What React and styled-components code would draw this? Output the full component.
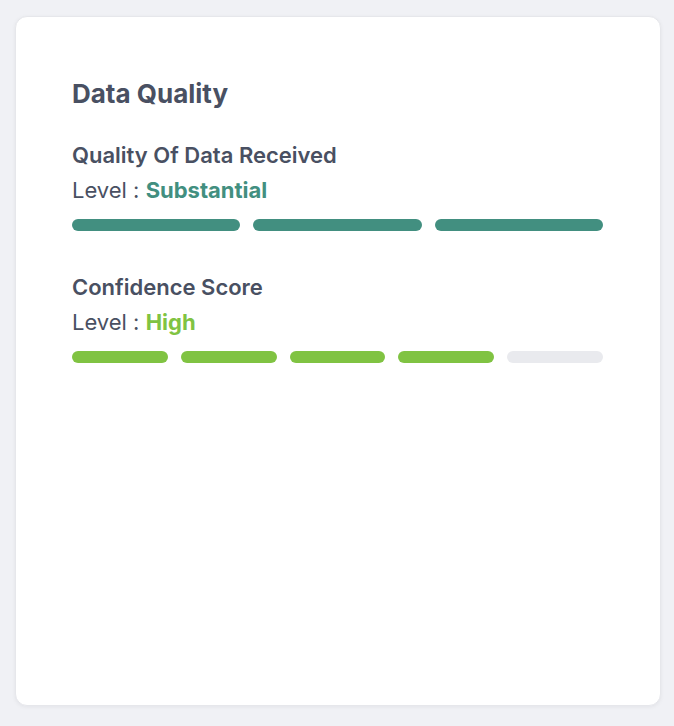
import React from 'react';
import styled, { createGlobalStyle } from 'styled-components';

const GlobalStyle = createGlobalStyle`
  body {
    margin: 0;
    background: #f0f1f5;
    font-family: Inter, "Noto Sans", sans-serif;
  }
`;

const Page = styled.div`
  padding: 16px 13px 20px 15px;
`;

const Card = styled.div`
  height: 690px;
  box-sizing: border-box;
  padding: 62px 57px 0 56px;
  background: #fff;
  border: 1px solid #e6e7eb;
  border-radius: 12px;
  box-shadow: 0 1px 4px rgba(16, 24, 40, 0.06);
`;

const Title = styled.h2`
  margin: 0;
  font-size: 26px;
  line-height: 30px;
  font-weight: 700;
  color: #495062;
`;

const Section = styled.div`
  margin-top: ${(p) => p.$top}px;
`;

const SectionTitle = styled.div`
  font-size: 22px;
  line-height: 28px;
  font-weight: 600;
  color: #495062;
`;

const Level = styled.div`
  margin-top: 7px;
  font-size: 22px;
  line-height: 28px;
  color: #495062;
`;

const LevelValue = styled.span`
  font-weight: 700;
  color: ${(p) => p.$color};
`;

const Bars = styled.div`
  margin-top: 15px;
  display: grid;
  grid-template-columns: repeat(${(p) => p.$count}, 1fr);
  gap: 13px;
`;

const Bar = styled.div`
  height: 12px;
  border-radius: 6px;
  background: ${(p) => (p.$on ? p.$color : '#e9eaee')};
`;

const metrics = [
  { title: 'Quality Of Data Received', level: 'Substantial', color: '#428f80', total: 3, filled: 3, top: 32 },
  { title: 'Confidence Score', level: 'High', color: '#80c342', total: 5, filled: 4, top: 42 },
];

const App = () => (
  <>
    <GlobalStyle />
    <Page>
      <Card>
        <Title>Data Quality</Title>
        {metrics.map((m) => (
          <Section key={m.title} $top={m.top}>
            <SectionTitle>{m.title}</SectionTitle>
            <Level>
              Level : <LevelValue $color={m.color}>{m.level}</LevelValue>
            </Level>
            <Bars $count={m.total}>
              {Array.from({ length: m.total }, (_, i) => (
                <Bar key={i} $on={i < m.filled} $color={m.color} />
              ))}
            </Bars>
          </Section>
        ))}
      </Card>
    </Page>
  </>
);

export default App;
